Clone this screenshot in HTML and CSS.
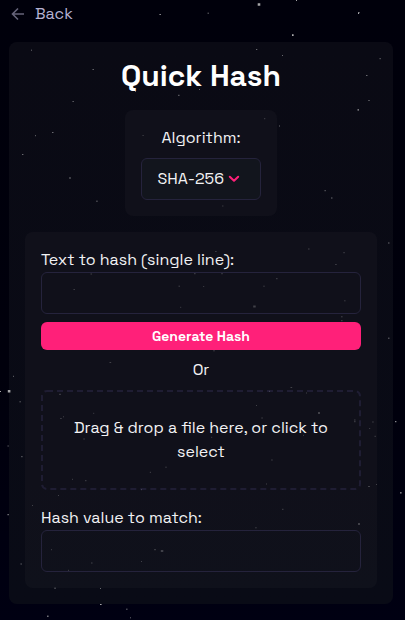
FILE: index.html
```html
<!DOCTYPE html>
<html lang="en">
<head>
<meta charset="utf-8">
<title>Quick Hash</title>
<link rel="stylesheet" href="styles.css">
</head>
<body>
<nav class="topbar">
  <a class="back"><svg class="back-icon" width="14" height="14" viewBox="0 0 14 14"><path d="M13 7H1.5M7 1.5L1.5 7L7 12.5"/></svg><span class="back-label">Back</span></a>
</nav>
<main class="card">
  <h1 class="title">Quick Hash</h1>
  <section class="panel algorithm">
    <label class="algorithm-label">Algorithm:</label>
    <div class="select"><span class="select-value">SHA-256</span><svg width="12" height="8" viewBox="0 0 12 8"><path d="M1.8 1.7L6 5.8L10.2 1.7"/></svg></div>
  </section>
  <section class="panel form">
    <label class="label" for="text">Text to hash (single line):</label>
    <input class="input" id="text" type="text">
    <button class="button">Generate Hash</button>
    <p class="or">Or</p>
    <div class="dropzone">
      <svg class="outline" width="320" height="100"><rect x="1" y="1" width="318" height="98" rx="5"/></svg>
      <p class="drop-text">Drag &amp; drop a file here, or click to<br>select</p>
    </div>
    <label class="label" for="match">Hash value to match:</label>
    <input class="input" id="match" type="text">
  </section>
</main>
<svg class="stars" width="405" height="620" viewBox="0 0 405 620">
  <path class="star bright" d="M159.500 14.500h1.300M296 .5h1M358 12.700h1.600M358 13.500h1M292 34.700h1.600M292 35.500h1.600M0 391.500h1M7.500 514.700h1.300M47 616.200h1.600M100 604.500h1.600M395 421.700h1.400"/>
  <path class="star large" d="M257.700 4.500h2.600M7.800 391.300h2.600"/>
  <path class="star medium" d="M207.500 13.200h1.500M126 609.200h1.600M130 617.800h1M400 492.500h1.600M400 493.200h1.600M31 50.200h1M92.500 69.500h1.400M72.500 101.500h1.300M178 95.300h1.600M199 89.500h1M135 91.500h1M256 49.500h1.300M282 55.500h1M379.500 58.700h1.300M366 75.500h1.500M368.300 100.500h1.400M357.500 109.500h1.500M357.500 110.300h1.500M52 132.500h1.500M35 135.700h1M22 154.500h1.400M96.200 201.200h1.500M279 126h1M324.500 190.700h1.300M331 198h1.500M388 243h1.500M388 338.200h1.500M13 376.300h1M19.500 401.800h1.300M21.200 456.700h1.400M7.500 446h1.300M20.500 564h1.300M54.300 588.200h1.500M100 588.500h1"/>
  <path class="star faint" d="M69 177.500h2M69 178.500h2M264 118.700h1.300M142.500 135.500h1.200M222.200 206h1.200M308 249h1.600M343.300 252.700h1.500M335.200 264.500h1.500M215.200 251.500h1.400M90.500 274h1.600M194 273.700h1.600M221.200 273.700h1.600M276 278.700h1.600M73.500 289.500h1.400M178.500 286.200h1.500M203.200 286.500h1M263.300 286.200h1.400M180.200 307.300h1M344.200 300.800h1.300M341 316.800h1.600M341 320.700h1.600M213.200 350.800h1.600M109.500 362.500h1.700M59 394.300h2M60.200 418.500h1.500M63 416.800h1M93.200 413.300h1M83.300 439h1.500M165.300 467.200h1.400M149.800 472.300h1.200M72 479.300h1M85 480.700h1.500M141 489.700h1M58 495.500h1M290.500 387.500h1.700M269 391.300h1M306 393h1M256 405.500h1M261.300 418h1.500M354 420h1.600M354 421.700h1.600M372.200 422h1.500M369.200 428.500h1M374.500 436.300h1.400M211.200 437.300h1M303 435.300h1M271.200 460h1.500M266 484h1M368 486.500h2M376 484.500h1M32 505.500h1M282 509.300h1.500M255.200 527.800h1.500M358 523.500h2M358 524.500h2M51 549.700h1M154 549.700h2M91 563h1.600M141 561.500h1M68 570.300h1"/>
  <path class="star faint soft" d="M253.200 306.500h2.500M160.800 551h2.500M318 413h2"/>
</svg>
</body>
</html>
```

FILE: styles.css
```css
* { box-sizing: border-box; }

body {
  position: relative;
  margin: 0;
  height: 620px;
  overflow: hidden;
  background: linear-gradient(#00000b, #00000c 60%, #000012);
  color: #f2f2f4;
  font: 16px/24px "Space Grotesk", Inter, sans-serif;
}

.topbar { height: 42px; padding: 2px 0 0 11px; }
.back { display: flex; align-items: center; gap: 10px; color: #b5b2d2; }
.back-icon path { fill: none; stroke: #65637a; stroke-width: 1.6; }

.card {
  width: 384px;
  height: 562px;
  margin-left: 9px;
  padding: 16px;
  border-radius: 8px;
  background: linear-gradient(#0a0a14, #090b16);
}

.title {
  margin: 0;
  height: 52px;
  color: #fff;
  font-size: 30px;
  line-height: 36px;
  font-weight: 700;
  text-align: center;
}

.panel { padding: 16px; border-radius: 8px; background: #10101a; }

.algorithm { width: 152px; height: 106px; margin: 0 auto 16px; text-align: center; }
.algorithm-label { display: block; height: 32px; white-space: nowrap; }

.select {
  display: flex;
  align-items: center;
  gap: 4px;
  height: 42px;
  padding-left: 15.500px;
  border: 1px solid #25233c;
  border-radius: 6px;
  background: #12151d;
  white-space: nowrap;
}
.select path { fill: none; stroke: #ff2079; stroke-width: 2; stroke-linecap: round; stroke-linejoin: round; }

.form { height: 356px; background: linear-gradient(#10101a 70%, #0f111b); }
.label { display: block; white-space: nowrap; }
.input {
  display: block;
  width: 100%;
  height: 42px;
  border: 1px solid #25233c;
  border-radius: 6px;
  outline: 0;
  background: transparent;
}
.button {
  display: block;
  width: 100%;
  height: 28px;
  margin: 8px 0;
  padding: 0;
  border: 0;
  border-radius: 6px;
  background: #ff2079;
  color: #fff;
  font: 700 14px/28px "Space Grotesk", Inter, sans-serif;
}
.or { margin: 0 0 8px; text-align: center; }
.dropzone { position: relative; height: 100px; margin-bottom: 16px; padding-top: 26px; }
.outline { position: absolute; inset: 0; }
.outline rect { fill: none; stroke: #1f1d33; stroke-width: 2; stroke-dasharray: 6 4; }
.drop-text { margin: 0; text-align: center; white-space: nowrap; }

.stars { position: absolute; top: 0; left: 0; pointer-events: none; }
.star { fill: none; stroke: #ddd; stroke-width: 1; }
.bright { opacity: .75; }
.medium { opacity: .45; }
.large { stroke-width: 2.5; opacity: .75; }
.faint { opacity: .24; }
.soft { stroke-width: 2.2; }
```
